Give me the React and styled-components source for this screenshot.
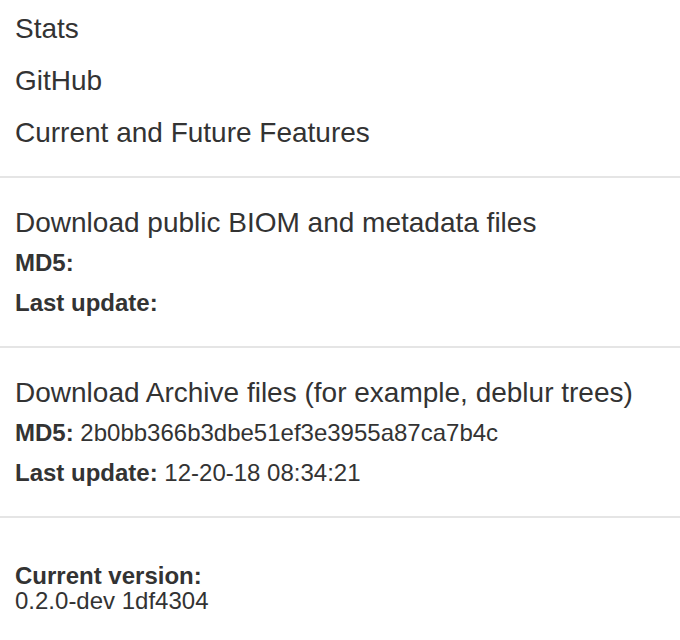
import { Fragment } from 'react';
import styled, { createGlobalStyle } from 'styled-components';

const GlobalStyle = createGlobalStyle`
  html, body {
    margin: 0;
    padding: 0;
    background: #fff;
  }
  body {
    font-family: "Liberation Sans", Arial, Helvetica, sans-serif;
    color: #333;
  }
`;

const Menu = styled.ul`
  list-style: none;
  margin: 0;
  padding: 3px 0 0;
  width: 680px;
`;

const MenuItem = styled.li`
  padding: 6px 15px;
  font-size: 28px;
  line-height: 40px;
  white-space: nowrap;
`;

const Divider = styled.li`
  height: 2px;
  margin: ${(p) => p.$top || 0}px 0 0;
  background: #e5e5e5;
`;

const InfoBlock = styled.li`
  padding: 24px 15px 23px;
  white-space: nowrap;
`;

const InfoTitle = styled.div`
  font-size: 28px;
  line-height: 41px;
`;

const InfoLine = styled.div`
  font-size: 24px;
  line-height: 40px;
`;

const Label = styled.b`
  font-weight: 700;
`;

const Version = styled.li`
  padding: 45px 15px 0;
  font-size: 24px;
  line-height: 25px;
`;

const files = [
  { title: 'Download public BIOM and metadata files', md5: '', updated: '' },
  {
    title: 'Download Archive files (for example, deblur trees)',
    md5: '2b0bb366b3dbe51ef3e3955a87ca7b4c',
    updated: '12-20-18 08:34:21',
  },
];

export default function App() {
  return (
    <>
      <GlobalStyle />
      <Menu>
        <MenuItem>Stats</MenuItem>
        <MenuItem>GitHub</MenuItem>
        <MenuItem>Current and Future Features</MenuItem>
        <Divider $top={17} />
        {files.map((f) => (
          <Fragment key={f.title}>
            <InfoBlock>
              <InfoTitle>{f.title}</InfoTitle>
              <InfoLine>
                <Label>MD5:</Label> {f.md5}
              </InfoLine>
              <InfoLine>
                <Label>Last update:</Label> {f.updated}
              </InfoLine>
            </InfoBlock>
            <Divider />
          </Fragment>
        ))}
        <Version>
          <Label>Current version:</Label>
          <div>0.2.0-dev 1df4304</div>
        </Version>
      </Menu>
    </>
  );
}
